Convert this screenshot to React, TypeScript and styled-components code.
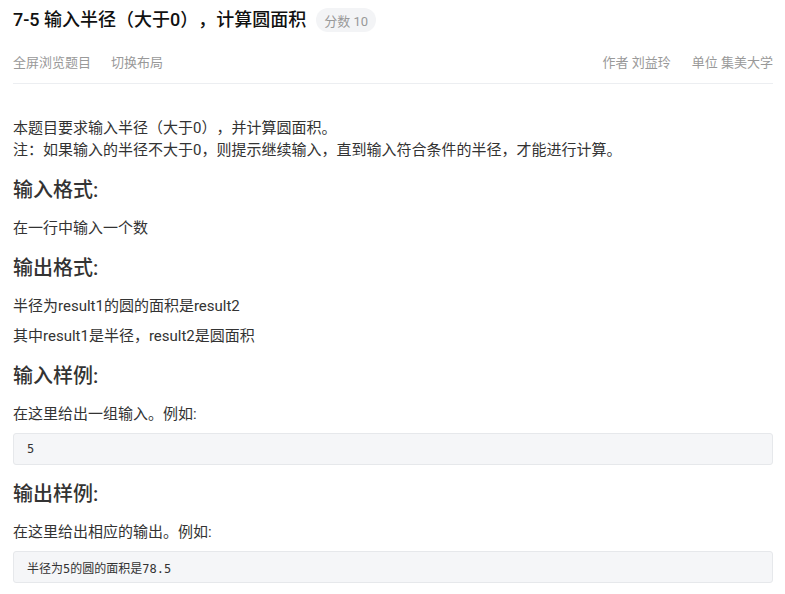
import React from "react";
import styled, { createGlobalStyle } from "styled-components";

const Global = createGlobalStyle`
  html, body { margin: 0; padding: 0; background: #fff; }
  body {
    font-family: Roboto, "Noto Sans CJK SC", sans-serif;
    color: #333;
    text-spacing-trim: space-all;
  }
  * { box-sizing: border-box; }
`;

const Page = styled.div`
  padding: 0 12px 0 13px;
  width: 785px;
`;

const Header = styled.header`
  border-bottom: 1px solid #eceef1;
  padding-bottom: 12px;
`;

const TitleRow = styled.div`
  display: flex;
  align-items: center;
  height: 40px;
  gap: 10px;
`;

const Title = styled.h1`
  margin: 0;
  font-size: 18px;
  font-weight: 500;
  color: #111;
  line-height: 24px;
`;

const Badge = styled.span`
  display: inline-flex;
  align-items: center;
  height: 24px;
  padding: 0 8px;
  border-radius: 12px;
  background: #f3f4f6;
  color: #999;
  font-size: 13px;
`;

const MetaRow = styled.div`
  display: flex;
  justify-content: space-between;
  align-items: center;
  height: 20px;
  margin-top: 11px;
  font-size: 13px;
  color: #999;
`;

const MetaGroup = styled.div<{ $gap: number }>`
  display: flex;
  gap: ${(p) => p.$gap}px;
`;

const Content = styled.main`
  padding-top: 33px;
`;

const P = styled.p`
  margin: 0 0 8px;
  font-size: 15px;
  line-height: 22px;
  color: #333;
`;

const H = styled.h3`
  margin: 15px 0 13px;
  font-size: 20px;
  line-height: 28px;
  font-weight: 500;
  color: #333;
`;

const Code = styled.pre`
  margin: 0;
  background: #f5f6f8;
  border: 1px solid #e6e8eb;
  border-radius: 3px;
  padding: 0 13px;
  height: 32px;
  display: flex;
  align-items: center;
  font-family: "DejaVu Sans Mono", "Noto Sans CJK SC", monospace;
  font-size: 12px;
  color: #333;
`;

export default function App() {
  return (
    <Page>
      <Global />
      <Header>
        <TitleRow>
          <Title>7-5 输入半径（大于0），计算圆面积</Title>
          <Badge>分数 10</Badge>
        </TitleRow>
        <MetaRow>
          <MetaGroup $gap={20}>
            <span>全屏浏览题目</span>
            <span>切换布局</span>
          </MetaGroup>
          <MetaGroup $gap={21}>
            <span>作者 刘益玲</span>
            <span>单位 集美大学</span>
          </MetaGroup>
        </MetaRow>
      </Header>
      <Content>
        <P>
          本题目要求输入半径（大于0），并计算圆面积。
          <br />
          注：如果输入的半径不大于0，则提示继续输入，直到输入符合条件的半径，才能进行计算。
        </P>
        <H>输入格式:</H>
        <P>在一行中输入一个数</P>
        <H>输出格式:</H>
        <P>半径为result1的圆的面积是result2</P>
        <P>其中result1是半径，result2是圆面积</P>
        <H>输入样例:</H>
        <P>在这里给出一组输入。例如:</P>
        <Code>5</Code>
        <H>输出样例:</H>
        <P>在这里给出相应的输出。例如:</P>
        <Code>半径为5的圆的面积是78.5</Code>
      </Content>
    </Page>
  );
}
